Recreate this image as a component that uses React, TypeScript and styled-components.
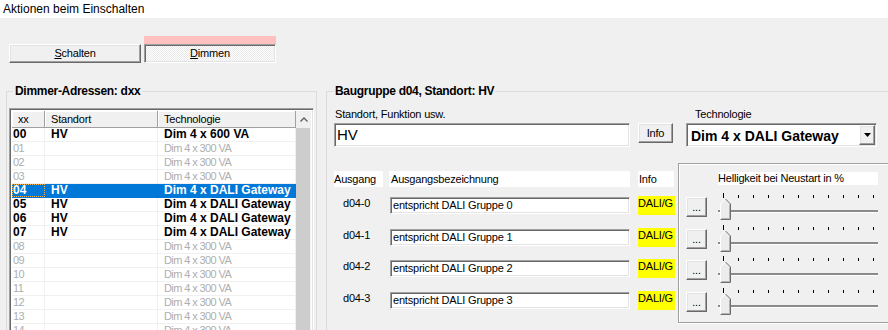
import React from 'react';
import styled, { createGlobalStyle, css } from 'styled-components';

type ListRowType = {
	nr: string
	place: string
	tech: string
	state: 'on' | 'off' | 'sel'
}

const listRows: ListRowType[] = [
	{ nr: '00', place: 'HV', tech: 'Dim 4 x 600 VA', state: 'on' },
	{ nr: '01', place: '', tech: 'Dim 4 x 300 VA', state: 'off' },
	{ nr: '02', place: '', tech: 'Dim 4 x 300 VA', state: 'off' },
	{ nr: '03', place: '', tech: 'Dim 4 x 300 VA', state: 'off' },
	{ nr: '04', place: 'HV', tech: 'Dim 4 x DALI Gateway', state: 'sel' },
	{ nr: '05', place: 'HV', tech: 'Dim 4 x DALI Gateway', state: 'on' },
	{ nr: '06', place: 'HV', tech: 'Dim 4 x DALI Gateway', state: 'on' },
	{ nr: '07', place: 'HV', tech: 'Dim 4 x DALI Gateway', state: 'on' },
	{ nr: '08', place: '', tech: 'Dim 4 x 300 VA', state: 'off' },
	{ nr: '09', place: '', tech: 'Dim 4 x 300 VA', state: 'off' },
	{ nr: '10', place: '', tech: 'Dim 4 x 300 VA', state: 'off' },
	{ nr: '11', place: '', tech: 'Dim 4 x 300 VA', state: 'off' },
	{ nr: '12', place: '', tech: 'Dim 4 x 300 VA', state: 'off' },
	{ nr: '13', place: '', tech: 'Dim 4 x 300 VA', state: 'off' },
	{ nr: '14', place: '', tech: 'Dim 4 x 300 VA', state: 'off' },
	{ nr: '15', place: '', tech: 'Dim 4 x 300 VA', state: 'off' },
]

const outputs = ['0', '1', '2', '3']

const Slider = () => {
	return (
		<SliderBox>
			<Ticks>
				{Array.from({ length: 11 }).map((_, i) => <Tick key={i} $first={i === 0} />)}
			</Ticks>
			<TrackArea>
				<Track />
				<Thumb width="11" height="22" viewBox="0 0 11 22">
					<path d="M0.5 21.5V6L5.5 1L10.5 6V21.5Z" fill="#ececec" />
					<path d="M0.5 21V6L5.5 1" fill="none" stroke="#fff" />
					<path d="M5.5 1L10.5 6V21.5H0.5" fill="none" stroke="#6e6e6e" />
					<path d="M9.5 6.5V20.5H1.5" fill="none" stroke="#b4b4b4" />
				</Thumb>
			</TrackArea>
		</SliderBox>
	)
}

export default function App() {
	return (
		<Page>
			<GlobalStyle />
			<TitleBar>Aktionen beim Einschalten</TitleBar>
			<Tabs>
				<TabButton><u>S</u>chalten</TabButton>
				<ActiveTab>
					<PinkBar />
					<TabButton $pressed><u>D</u>immen</TabButton>
				</ActiveTab>
			</Tabs>
			<Groups>
				<LeftGroup>
					<GroupTitle $left>Dimmer-Adressen: dxx</GroupTitle>
					<ListBox>
						<ListTable>
							<ListHead>
								<HeadCell>xx</HeadCell>
								<HeadCell>Standort</HeadCell>
								<HeadCell>Technologie</HeadCell>
							</ListHead>
							{listRows.map(row => (
								<ListRow key={row.nr} $state={row.state}>
									<ListCell $first $state={row.state}>{row.nr}</ListCell>
									<ListCell $state={row.state}>{row.place}</ListCell>
									<ListCell $state={row.state}>{row.tech}</ListCell>
								</ListRow>
							))}
						</ListTable>
						<ScrollBar>
							<ScrollUp>
								<svg width="8" height="5" viewBox="0 0 8 5">
									<path d="M0.5 4.5L4 1L7.5 4.5" fill="none" stroke="#606060" strokeWidth="1.4" />
								</svg>
							</ScrollUp>
							<ScrollThumb />
						</ScrollBar>
					</ListBox>
				</LeftGroup>
				<RightGroup>
					<GroupTitle>Baugruppe d04, Standort: HV</GroupTitle>
					<TopRow>
						<Field $width={296}>
							<FieldLabel $indent={1}>Standort, Funktion usw.</FieldLabel>
							<NameBox>HV</NameBox>
						</Field>
						<InfoButton>Info</InfoButton>
						<Field $width={191} $gap={13}>
							<FieldLabel $indent={9}>Technologie</FieldLabel>
							<Combo>
								<ComboText>Dim 4 x DALI Gateway</ComboText>
								<DropButton>
									<svg width="7" height="4" viewBox="0 0 7 4">
										<path d="M0 0H7L3.5 4Z" fill="#000" />
									</svg>
								</DropButton>
							</Combo>
						</Field>
					</TopRow>
					<BottomArea>
						<OutputTable>
							<OutputHead>
								<HeadLabel $width={49} $gap={6}>Ausgang</HeadLabel>
								<HeadLabel $width={241} $gap={8} $pad={2}>Ausgangsbezeichnung</HeadLabel>
								<HeadLabel $width={36} $pad={1}>Info</HeadLabel>
							</OutputHead>
							{outputs.map(n => (
								<OutputRow key={n}>
									<OutputName>d04-{n}</OutputName>
									<OutputInput>entspricht DALI Gruppe {n}</OutputInput>
									<DaliTag>DALI/G</DaliTag>
								</OutputRow>
							))}
						</OutputTable>
						<BrightPanel>
							<BrightLabel>Helligkeit bei Neustart in %</BrightLabel>
							{outputs.map(n => (
								<PanelRow key={n}>
									<DotsButton>...</DotsButton>
									<Slider />
								</PanelRow>
							))}
						</BrightPanel>
					</BottomArea>
				</RightGroup>
			</Groups>
		</Page>
	)
}

const GlobalStyle = createGlobalStyle`
	html, body {
		margin: 0;
		padding: 0;
	}
	body {
		background: #f0f0f0;
		font-family: "Liberation Sans", Arial, sans-serif;
		font-size: 11px;
		color: #000;
		overflow: hidden;
	}
`

const raised = css`
	border: 1px solid;
	border-color: #fff #696969 #696969 #fff;
	box-shadow: inset -1px -1px 0 #a0a0a0, inset 1px 1px 0 #e3e3e3;
	background: #f0f0f0;
`

const sunken = css`
	border: 1px solid;
	border-color: #a0a0a0 #fff #fff #a0a0a0;
	box-shadow: inset 1px 1px 0 #696969, inset -1px -1px 0 #e3e3e3;
	background: #fff;
`

const Page = styled.div`
	width: 888px;
	height: 330px;
	overflow: hidden;
	letter-spacing: -0.2px;
`

const TitleBar = styled.div`
	height: 18px;
	line-height: 18px;
	padding-left: 3px;
	background: #fff;
	font-size: 12px;
	letter-spacing: 0;
`

const Tabs = styled.div`
	display: flex;
	align-items: flex-end;
	gap: 3px;
	margin-top: 18px;
	padding-left: 9px;
`

const ActiveTab = styled.div`
	display: flex;
	flex-direction: column;
`

const PinkBar = styled.div`
	height: 8px;
	background: #ffc0c0;
`

const TabButton = styled.div<{ $pressed?: boolean }>`
	box-sizing: border-box;
	width: 132px;
	height: 19px;
	line-height: 17px;
	text-align: center;
	${raised}

	${props => props.$pressed && css`
		border-color: #a0a0a0 #fff #fff #a0a0a0;
		box-shadow: inset 1px 1px 0 #696969, inset -1px -1px 0 #e3e3e3;
		background: repeating-conic-gradient(#fff 0 25%, #e9e9e9 0 50%) 0 0 / 2px 2px;
	`}
`

const Groups = styled.div`
	display: flex;
	gap: 9px;
	margin-top: 21px;
	padding-left: 6px;
`

const GroupBox = styled.fieldset`
	box-sizing: border-box;
	flex: none;
	margin: 0;
	min-width: 0;
	height: 270px;
	border: 1px solid #dcdcdc;
`

const LeftGroup = styled(GroupBox)`
	width: 311px;
	padding: 10px 2px 0 2px;
`

const RightGroup = styled(GroupBox)`
	width: 580px;
	padding: 10px 0 0 7px;
`

const GroupTitle = styled.legend<{ $left?: boolean }>`
	font-size: 12px;
	font-weight: 700;
	line-height: 14px;
	letter-spacing: -0.3px;
	padding: 0 ${props => props.$left ? 2 : 1}px;
	margin-left: ${props => props.$left ? 4 : 0}px;
`

const ListBox = styled.div`
	display: flex;
	height: 240px;
	padding: 2px;
	${sunken}
`

const ListTable = styled.div`
	width: 284px;
	flex: none;
`

const columns = css`
	display: grid;
	grid-template-columns: 33px 113px 138px;
`

const ListHead = styled.div`
	${columns}
	height: 17px;
`

const HeadCell = styled.div`
	padding-left: 6px;
	line-height: 16px;
	background: #f0f0f0;
	border-right: 1px solid #a0a0a0;
	border-bottom: 1px solid #a0a0a0;
	box-shadow: inset 1px 1px 0 #fff;
	white-space: nowrap;
`

const ListRow = styled.div<{ $state: 'on' | 'off' | 'sel' }>`
	${columns}
	box-sizing: border-box;
	height: 14px;
	border-bottom: 1px solid ${props => props.$state === 'sel' ? '#0078d7' : '#f0f0f0'};
	background: ${props => props.$state === 'sel' ? '#0078d7' : '#fff'};
	color: ${props => props.$state === 'sel' ? '#fff' : props.$state === 'on' ? '#000' : '#aeaeae'};
	font-size: ${props => props.$state === 'off' ? 11 : 12}px;
	font-weight: ${props => props.$state === 'off' ? 400 : 700};
	letter-spacing: ${props => props.$state === 'off' ? -0.6 : 0}px;
`

const ListCell = styled.div<{ $first?: boolean, $state: 'on' | 'off' | 'sel' }>`
	padding-left: ${props => props.$first ? 1 : 6}px;
	line-height: 13px;
	white-space: nowrap;
	overflow: hidden;
	border-right: 1px solid ${props => props.$state === 'sel' ? '#0078d7' : '#f0f0f0'};
	${props => props.$first && props.$state === 'sel' && css`
		outline: 1px dotted #f7b24a;
		outline-offset: -1px;
	`}
`

const ScrollBar = styled.div`
	display: flex;
	flex-direction: column;
	width: 15px;
	flex: none;
	background: #f0f0f0;
`

const ScrollUp = styled.div`
	display: flex;
	align-items: center;
	justify-content: center;
	height: 17px;
	flex: none;
`

const ScrollThumb = styled.div`
	flex: 1;
	margin-right: 1px;
	background: #cdcdcd;
`

const TopRow = styled.div`
	display: flex;
	align-items: flex-start;
`

const Field = styled.div<{ $width: number, $gap?: number }>`
	display: flex;
	flex-direction: column;
	gap: 2px;
	width: ${props => props.$width}px;
	margin-left: ${props => props.$gap || 0}px;
`

const FieldLabel = styled.div<{ $indent: number }>`
	line-height: 13px;
	padding-left: ${props => props.$indent}px;
	white-space: nowrap;
`

const NameBox = styled.div`
	box-sizing: border-box;
	height: 24px;
	padding-left: 2px;
	line-height: 22px;
	font-size: 15px;
	letter-spacing: 0;
	${sunken}
`

const InfoButton = styled.div`
	box-sizing: border-box;
	width: 35px;
	height: 20px;
	margin: 15px 0 0 8px;
	line-height: 18px;
	text-align: center;
	${raised}
`

const Combo = styled.div`
	box-sizing: border-box;
	display: flex;
	height: 24px;
	padding: 1px;
	${sunken}
`

const ComboText = styled.div`
	flex: 1;
	padding: 1px 0 0 3px;
	line-height: 20px;
	font-size: 14px;
	font-weight: 700;
	letter-spacing: 0;
	white-space: nowrap;
`

const DropButton = styled.div`
	box-sizing: border-box;
	display: flex;
	align-items: center;
	justify-content: center;
	width: 16px;
	height: 20px;
	${raised}
`

const BottomArea = styled.div`
	display: flex;
	align-items: flex-start;
	margin-top: 16px;
`

const OutputTable = styled.div`
	width: 341px;
	flex: none;
	padding-top: 8px;
`

const OutputHead = styled.div`
	display: flex;
	height: 16px;
	margin-bottom: 10px;
`

const HeadLabel = styled.div<{ $width: number, $gap?: number, $pad?: number }>`
	box-sizing: border-box;
	width: ${props => props.$width}px;
	margin-right: ${props => props.$gap || 0}px;
	padding-left: ${props => props.$pad || 0}px;
	line-height: 16px;
	background: #fff;
	white-space: nowrap;
`

const rowHeight = '31.67px'

const OutputRow = styled.div`
	display: flex;
	align-items: flex-start;
	height: ${rowHeight};
`

const OutputName = styled.div`
	width: 56px;
	padding-left: 9px;
	box-sizing: border-box;
	line-height: 13px;
`

const OutputInput = styled.div`
	box-sizing: border-box;
	width: 240px;
	height: 17px;
	padding-left: 2px;
	line-height: 15px;
	white-space: nowrap;
	${sunken}
`

const DaliTag = styled.div`
	width: 37px;
	height: 19px;
	margin: -1px 0 0 8px;
	line-height: 15px;
	background: #ffff00;
`

const BrightPanel = styled.div`
	box-sizing: border-box;
	flex: 1;
	height: 160px;
	margin-left: 3px;
	padding: 8px 0 0 7px;
	border: 1px solid #a0a0a0;
	box-shadow: inset 1px 1px 0 #fff, 0 1px 0 #fff;
`

const BrightLabel = styled.div`
	width: 160px;
	margin: 0 0 12px 32px;
	line-height: 13px;
	background: #fff;
	white-space: nowrap;
`

const PanelRow = styled.div`
	display: flex;
	align-items: flex-start;
	height: ${rowHeight};
`

const DotsButton = styled.div`
	box-sizing: border-box;
	width: 21px;
	height: 20px;
	line-height: 18px;
	text-align: center;
	${raised}
`

const SliderBox = styled.div`
	width: 160px;
	margin: -4px 0 0 11px;
`

const Ticks = styled.div`
	display: flex;
	align-items: flex-end;
	justify-content: space-between;
	width: 151px;
	height: 5px;
	margin-left: 5px;
`

const Tick = styled.div<{ $first: boolean }>`
	width: 1px;
	height: ${props => props.$first ? 5 : 3}px;
	background: #000;
`

const TrackArea = styled.div`
	position: relative;
	box-sizing: border-box;
	height: 23px;
	padding-top: 12px;
`

const Track = styled.div`
	height: 2px;
	background: #8a8a8a;
	border-bottom: 1px solid #fff;
`

const Thumb = styled.svg`
	position: absolute;
	top: 0;
	left: 2px;
	display: block;
`
